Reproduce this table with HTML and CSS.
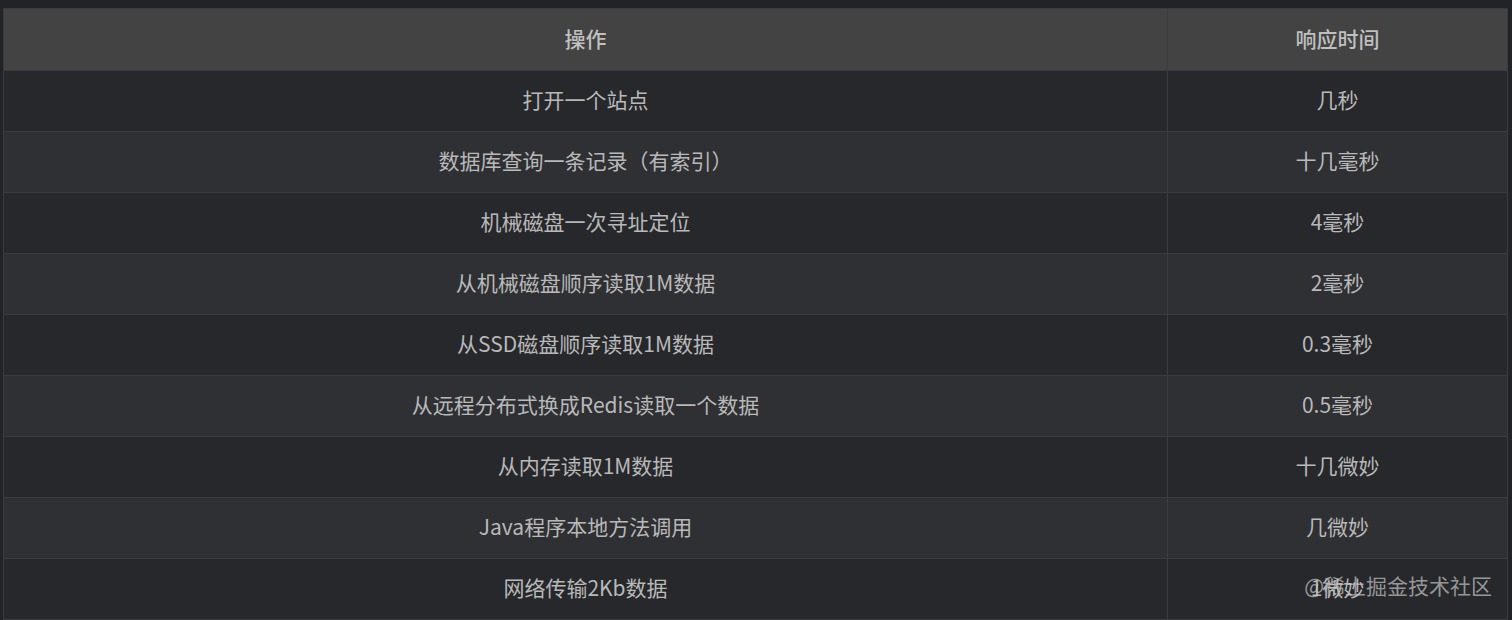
FILE: index.html
```html
<!DOCTYPE html>
<html lang="zh">
<head>
<meta charset="utf-8">
<link rel="stylesheet" href="styles.css">
</head>
<body>
<div class="page">
  <table class="grid">
    <thead>
      <tr><th class="op">操作</th><th class="rt">响应时间</th></tr>
    </thead>
    <tbody>
      <tr><td>打开一个站点</td><td>几秒</td></tr>
      <tr><td>数据库查询一条记录（有索引）</td><td>十几毫秒</td></tr>
      <tr><td>机械磁盘一次寻址定位</td><td>4毫秒</td></tr>
      <tr><td>从机械磁盘顺序读取1M数据</td><td>2毫秒</td></tr>
      <tr><td>从SSD磁盘顺序读取1M数据</td><td>0.3毫秒</td></tr>
      <tr><td>从远程分布式换成Redis读取一个数据</td><td>0.5毫秒</td></tr>
      <tr><td>从内存读取1M数据</td><td>十几微妙</td></tr>
      <tr><td>Java程序本地方法调用</td><td>几微妙</td></tr>
      <tr><td>网络传输2Kb数据</td><td>1微妙</td></tr>
    </tbody>
  </table>
  <div class="watermark">@稀土掘金技术社区</div>
</div>
</body>
</html>
```
FILE: styles.css
```css
html, body {
  margin: 0;
  padding: 0;
  background: #222326;
  height: 620px;
  overflow: hidden;
}
.page {
  position: relative;
  padding: 8px 5px 0 3px;
  font-family: "Noto Sans CJK SC", "Liberation Sans", sans-serif;
}
.grid {
  width: 1505px;
  border-collapse: collapse;
  table-layout: fixed;
  font-size: 21px;
  color: #b9b9b9;
}
.grid th, .grid td {
  text-align: center;
  border: 1px solid #3b3c3f;
  padding: 0 0 4px;
  height: 56px;
  line-height: 24px;
}
.grid th {
  background: #434343;
  color: #bfbfbf;
  font-weight: 500;
  height: 57px;
}
.grid .op { width: 1163px; }
.grid tbody tr:nth-child(odd) td { background: #27282b; }
.grid tbody tr:nth-child(even) td { background: #2f3033; }
.watermark {
  position: absolute;
  right: 20px;
  top: 572px;
  font-size: 21px;
  line-height: 26px;
  color: rgba(200, 200, 200, 0.7);
}
```
